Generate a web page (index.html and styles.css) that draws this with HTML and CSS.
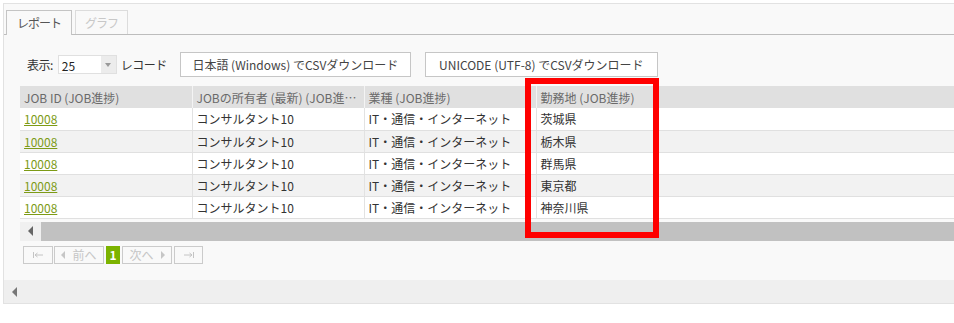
FILE: index.html
```html
<!DOCTYPE html>
<html lang="ja">
<head>
    <meta charset="UTF-8">
    <title>レポート</title>
    <link rel="stylesheet" href="styles.css">
</head>
<body>
    <div class="panel">
        <div class="tabs">
            <div class="tab active">レポート</div>
            <div class="tab disabled">グラフ</div>
        </div>

        <div class="content">
            <div class="toolbar">
                <span class="label">表示:</span>
                <div class="select">
                    <span class="select-value">25</span>
                    <span class="select-arrow"></span>
                </div>
                <span class="label">レコード</span>
                <button class="csv-button first">日本語 (Windows) でCSVダウンロード</button>
                <button class="csv-button">UNICODE (UTF-8) でCSVダウンロード</button>
            </div>

            <div class="grid">
                <table>
                    <colgroup>
                        <col class="col-fixed">
                        <col class="col-fixed">
                        <col class="col-fixed">
                        <col class="col-fixed">
                        <col>
                    </colgroup>
                    <thead>
                        <tr>
                            <th>JOB ID (JOB進捗)</th>
                            <th>JOBの所有者 (最新) (JOB進捗)</th>
                            <th>業種 (JOB進捗)</th>
                            <th>勤務地 (JOB進捗)</th>
                            <th class="filler"></th>
                        </tr>
                    </thead>
                    <tbody>
                        <tr>
                            <td><a href="#">10008</a></td>
                            <td>コンサルタント10</td>
                            <td>IT・通信・インターネット</td>
                            <td>茨城県</td>
                            <td class="filler"></td>
                        </tr>
                        <tr class="alt">
                            <td><a href="#">10008</a></td>
                            <td>コンサルタント10</td>
                            <td>IT・通信・インターネット</td>
                            <td>栃木県</td>
                            <td class="filler"></td>
                        </tr>
                        <tr>
                            <td><a href="#">10008</a></td>
                            <td>コンサルタント10</td>
                            <td>IT・通信・インターネット</td>
                            <td>群馬県</td>
                            <td class="filler"></td>
                        </tr>
                        <tr class="alt">
                            <td><a href="#">10008</a></td>
                            <td>コンサルタント10</td>
                            <td>IT・通信・インターネット</td>
                            <td>東京都</td>
                            <td class="filler"></td>
                        </tr>
                        <tr>
                            <td><a href="#">10008</a></td>
                            <td>コンサルタント10</td>
                            <td>IT・通信・インターネット</td>
                            <td>神奈川県</td>
                            <td class="filler"></td>
                        </tr>
                    </tbody>
                </table>
                <div class="hscroll">
                    <span class="hscroll-btn"><span class="arrow-left"></span></span>
                    <span class="hscroll-thumb"></span>
                </div>
            </div>

            <div class="pager">
                <span class="page-btn page-edge">
                    <svg width="12" height="8" viewBox="0 0 12 8"><path d="M1.5 1v6M3 4h8M3 4l2.5-2M3 4l2.5 2" stroke="#c4c4c4" fill="none"/></svg>
                </span>
                <span class="page-btn page-step"><span class="tri-left"></span>前へ</span>
                <span class="page-num">1</span>
                <span class="page-btn page-step">次へ<span class="tri-right"></span></span>
                <span class="page-btn page-edge last">
                    <svg width="12" height="8" viewBox="0 0 12 8"><path d="M10.5 1v6M1 4h8M9 4l-2.5-2M9 4l-2.5 2" stroke="#c4c4c4" fill="none"/></svg>
                </span>
            </div>
        </div>

        <div class="outer-scroll">
            <span class="arrow-left"></span>
        </div>
    </div>

    <!-- 注目箇所の赤枠 -->
    <div class="highlight"></div>
</body>
</html>
```

FILE: styles.css
```css
body {
    margin: 0;
    background-color: #fff;
    font-family: "Noto Sans CJK JP", "Noto Sans", sans-serif;
    font-size: 12px;
    color: #333;
}

.panel {
    margin: 3px 0 0 3px;
    height: 299px;
    border: 1px solid #e2e2e2;
    border-right: none;
    background-color: #f9f9f9;
    display: flex;
    flex-direction: column;
}

/* タブ */
.tabs {
    height: 30px;
    border-bottom: 1px solid #bdbdbd;
    display: flex;
    align-items: flex-end;
    gap: 3px;
    padding-left: 2px;
}

.tab {
    box-sizing: border-box;
    height: 25px;
    line-height: 24px;
    border: 1px solid #c4c4c4;
    border-bottom: none;
    margin-bottom: -1px;
    background-color: #f9f9f9;
    text-align: center;
    white-space: nowrap;
    letter-spacing: -1px;
}

.tab.active {
    width: 66px;
    color: #555;
}

.tab.disabled {
    width: 53px;
    height: 24px;
    margin-bottom: 0;
    color: #c8c8c8;
    border-color: #dcdcdc;
}

.content {
    padding-left: 16px;
}

/* ツールバー */
.toolbar {
    margin-top: 17px;
    height: 25px;
    padding-left: 7px;
    display: flex;
    align-items: center;
}

.label {
    color: #333;
    letter-spacing: -0.5px;
}

.select {
    margin: 0 4px 0 5px;
    width: 57px;
    height: 17px;
    border: 1px solid #e0e0e0;
    background-color: #fff;
    display: flex;
    align-items: center;
}

.select-value {
    flex: 1;
    padding-left: 3px;
    padding-top: 2px;
    color: #222;
}

.select-arrow {
    width: 15px;
    height: 17px;
    background-color: #ececec;
    position: relative;
}

.select-arrow::after {
    content: "";
    position: absolute;
    left: 4px;
    top: 7px;
    border-left: 3px solid transparent;
    border-right: 3px solid transparent;
    border-top: 4px solid #999;
}

.csv-button {
    box-sizing: border-box;
    height: 25px;
    border: 1px solid #c6c6c6;
    background-color: #fff;
    font-family: inherit;
    font-size: 12px;
    color: #444;
    padding: 0;
    margin-left: 14px;
    width: 233px;
}

.csv-button.first {
    margin-left: 13px;
    width: 231px;
}

/* グリッド */
.grid {
    margin-top: 9px;
    background-color: #f9f9f9;
}

table {
    width: 100%;
    border-collapse: collapse;
    table-layout: fixed;
}

.col-fixed {
    width: 172px;
}

th {
    height: 22px;
    padding: 0 4px;
    background-color: #e0e0e0;
    color: #6a6a6a;
    font-weight: normal;
    text-align: left;
    white-space: nowrap;
    overflow: hidden;
    text-overflow: ellipsis;
    border-left: 1px solid #f4f4f4;
    box-sizing: border-box;
}

th:first-child,
th.filler {
    border-left: none;
}

td {
    height: 22px;
    padding: 0 4px;
    background-color: #fff;
    color: #333;
    white-space: nowrap;
    overflow: hidden;
    border-left: 1px solid #e2e2e2;
    border-bottom: 1px solid #e0e0e0;
    box-sizing: border-box;
}

td:first-child,
td.filler {
    border-left: none;
}

tr.alt td {
    background-color: #f2f2f2;
}

td a {
    color: #7d9b16;
}

.hscroll {
    margin-top: 3px;
    height: 19px;
    display: flex;
}

.hscroll-btn {
    width: 21px;
    background-color: #f0f0f0;
    display: flex;
    align-items: center;
    justify-content: center;
}

.hscroll-thumb {
    flex: 1;
    background-color: #c1c1c1;
}

.arrow-left {
    display: inline-block;
    border-top: 5px solid transparent;
    border-bottom: 5px solid transparent;
    border-right: 5px solid #666;
}

/* ページャ */
.pager {
    margin-top: 5px;
    padding-left: 3px;
    height: 18px;
    display: flex;
    gap: 1px;
}

.page-btn {
    box-sizing: border-box;
    height: 18px;
    border: 1px solid #cbcbcb;
    color: #c6c6c6;
    display: flex;
    align-items: center;
    justify-content: center;
    gap: 7px;
}

.page-edge {
    width: 30px;
}

.page-edge.last {
    width: 29px;
    margin-left: 1px;
}

.page-step {
    width: 50px;
}

.page-num {
    width: 14px;
    height: 18px;
    background-color: #7cb300;
    color: #fff;
    font-weight: bold;
    text-align: center;
    line-height: 18px;
    margin: 0 1px;
}

.tri-left {
    border-top: 4px solid transparent;
    border-bottom: 4px solid transparent;
    border-right: 4px solid #c6c6c6;
}

.tri-right {
    border-top: 4px solid transparent;
    border-bottom: 4px solid transparent;
    border-left: 4px solid #c6c6c6;
}

.outer-scroll {
    margin-top: auto;
    height: 23px;
    background-color: #efefef;
    display: flex;
    align-items: center;
    padding-left: 8px;
}

.outer-scroll .arrow-left {
    border-right-color: #777;
}

.highlight {
    position: absolute;
    left: 525px;
    top: 78px;
    width: 122px;
    height: 148px;
    border: 6px solid #ff0000;
}
```
